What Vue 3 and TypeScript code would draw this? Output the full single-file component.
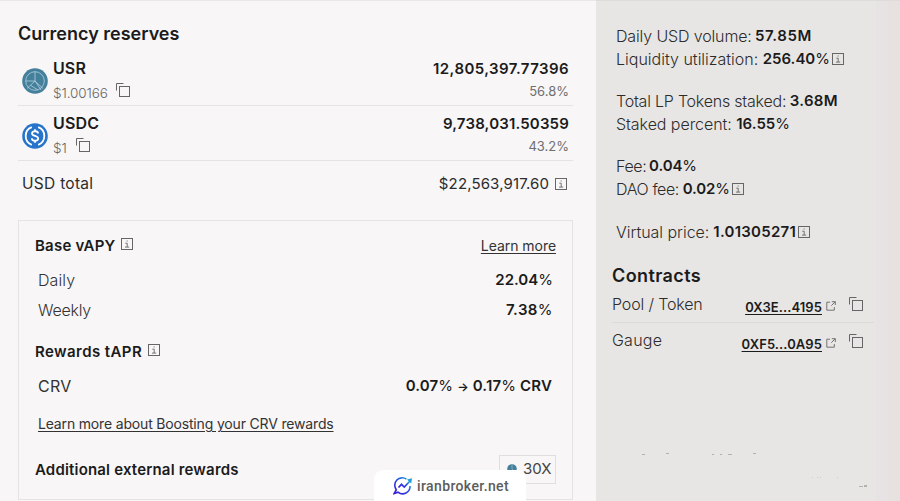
<script setup lang="ts">
import { h, type FunctionalComponent } from 'vue'

interface Reserve {
  symbol: string
  price: string
  amount: string
  share: string
}

const reserves: Reserve[] = [
  { symbol: 'USR', price: '$1.00166', amount: '12,805,397.77396', share: '56.8%' },
  { symbol: 'USDC', price: '$1', amount: '9,738,031.50359', share: '43.2%' },
]

const contracts = [
  { label: 'Pool / Token', address: '0X3E...4195', kind: 'pool' },
  { label: 'Gauge', address: '0XF5...0A95', kind: 'gauge' },
]

const InfoIcon: FunctionalComponent = () =>
  h('svg', { viewBox: '0 0 12 12', width: 12, height: 12, fill: 'none', stroke: '#666', 'stroke-width': 1 }, [
    h('rect', { x: 0.5, y: 0.5, width: 11, height: 11 }),
    h('path', { d: 'M4.3 5.2H6.2V9M4 9.1H8.2M5.6 3H6.7', 'stroke-width': 0.9 }),
  ])

const CopyIcon: FunctionalComponent = () =>
  h('svg', { viewBox: '0 0 14 14', width: 14, height: 14, fill: 'none', stroke: '#666', 'stroke-width': 1 }, [
    h('path', { d: 'M0.5 7.5V0.5H7.5' }),
    h('rect', { x: 3.5, y: 3.5, width: 10, height: 10 }),
  ])

const LaunchIcon: FunctionalComponent = () =>
  h('svg', { viewBox: '0 0 10 10', width: 10, height: 10, fill: 'none', stroke: '#666', 'stroke-width': 0.9 }, [
    h('path', { d: 'M4 1.2H0.8V9.2H8.3V6M5.8 0.7H9.3V4M9.2 0.8L5.3 4.7' }),
  ])
</script>

<template>
  <div class="page">
    <main class="main">
      <h2 class="title">Currency reserves</h2>
      <div v-for="r in reserves" :key="r.symbol" class="reserve" :class="r.symbol.toLowerCase()">
        <svg v-if="r.symbol === 'USR'" class="coin" viewBox="0 0 26 26">
          <circle cx="13" cy="13" r="12.8" fill="#447f9c" />
          <g fill="none" stroke="#b4d2dc" stroke-width="0.8">
            <circle cx="13" cy="13" r="9.3" />
            <path d="M13 3.7V13H3.7M13 13L21 20.5M13 13L5 20.5M8.5 17.3L16 22M13 13L19 22" />
          </g>
        </svg>
        <svg v-else class="coin" viewBox="0 0 26 26">
          <circle cx="13" cy="13" r="12.8" fill="#2775ca" />
          <g fill="none" stroke="#fff" stroke-width="1.8">
            <path d="M9.8 4.2A9.4 9.4 0 0 0 9.8 21.8M16.2 4.2A9.4 9.4 0 0 1 16.2 21.8" />
            <path d="M16.1 10.5C16 7.5 10 7.5 10 10.4C10 13.4 16.2 12.3 16.2 15.5C16.2 18.7 9.9 18.4 9.8 15.2M13 6.3V8.5M13 17.5V19.8" />
          </g>
        </svg>
        <div class="token">
          <b class="symbol">{{ r.symbol }}</b>
          <div class="price"><span>{{ r.price }}</span><CopyIcon /></div>
        </div>
        <div class="amounts">
          <b class="amount">{{ r.amount }}</b>
          <span class="share">{{ r.share }}</span>
        </div>
      </div>
      <div class="total">
        <span class="total-label">USD total</span>
        <span class="total-value">$22,563,917.60</span>
        <InfoIcon />
      </div>

      <section class="card">
        <div class="row head">
          <b class="base">Base vAPY</b><InfoIcon class="raised" />
          <a class="link more">Learn more</a>
        </div>
        <div class="row item daily"><span>Daily</span><b>22.04<i>%</i></b></div>
        <div class="row item weekly"><span>Weekly</span><b>7.38<i>%</i></b></div>
        <div class="row head second"><b class="rewards">Rewards tAPR</b><InfoIcon class="raised" /></div>
        <div class="row item crv"><span>CRV</span><b>0.07<i>%</i> <small>→</small> 0.17<i>%</i> CRV</b></div>
        <div class="row boost"><a class="link">Learn more about Boosting your CRV rewards</a></div>
        <div class="row head extra">
          <b class="external">Additional external rewards</b>
          <div class="chip">
            <svg class="dot" viewBox="0 0 10 10"><circle cx="5" cy="5" r="4.8" fill="#447f9c" /><path d="M5 1V5L8 8" fill="none" stroke="#a9ccd8" stroke-width=".6" /></svg>
            <span>30X</span>
          </div>
        </div>
      </section>
    </main>

    <aside class="side">
      <div class="stats">
        <p class="s1"><span>Daily USD volume:</span><b>57.85M</b></p>
        <p class="s2"><span>Liquidity utilization:</span><b>256.40<i>%</i></b><InfoIcon /></p>
        <p class="s3"><span>Total LP Tokens staked:</span><b>3.68M</b></p>
        <p class="s4"><span>Staked percent:</span><b>16.55<i>%</i></b></p>
        <p class="s5"><span>Fee:</span><b>0.04<i>%</i></b></p>
        <p class="s6"><span>DAO fee:</span><b>0.02<i>%</i></b><InfoIcon /></p>
        <p class="s7"><span>Virtual price:</span><b>1.01305271</b><InfoIcon /></p>
      </div>
      <h3 class="contracts-title">Contracts</h3>
      <div v-for="c in contracts" :key="c.kind" class="contract" :class="c.kind">
        <span class="c-label">{{ c.label }}</span>
        <a class="address">{{ c.address }}</a>
        <LaunchIcon class="launch" />
        <CopyIcon />
      </div>
      <svg class="specks" viewBox="0 0 260 40" fill="#b4b2b0">
        <path d="M30 5h3v1h-3zM54 4h3v1h-3zM100 5h2v1h-2zM108 5h2v1h-2zM116 5h4v1h-4zM141 4h3v1h-3zM247 37h4v1h-4zM252 36h3v2h-3z" />
        <path d="M200 28h1v1h-1zM205 28h1v1h-1zM208 28h1v1h-1zM225 28h1v1h-1z" opacity=".5" />
      </svg>
    </aside>

    <div class="watermark">
      <svg class="logo" viewBox="0 0 20 18" fill="none">
        <defs>
          <linearGradient id="ring" x1="0" y1="1" x2="1" y2="0">
            <stop offset="0" stop-color="#3a17d8" />
            <stop offset=".55" stop-color="#294ce8" />
            <stop offset="1" stop-color="#19b5dc" />
          </linearGradient>
        </defs>
        <path d="M13.5 2.2A7.4 7.4 0 0 0 3.3 12.7L1.2 16.5L5 15.2A7.4 7.4 0 0 0 17 9" stroke="url(#ring)" stroke-width="1.6" />
        <path d="M5.5 10.5L8.5 7.3L11.3 10L17 4" stroke="url(#ring)" stroke-width="1.7" />
        <path d="M14 2.6L19 1.3L18.2 6.5Z" fill="#1a9fdc" />
      </svg>
      <span>iranbroker.net</span>
    </div>
  </div>
</template>

<style>
body {
  background: #f8f6f7;
  overflow: hidden;
}
</style>

<style scoped>
* {
  box-sizing: border-box;
}
.page {
  position: relative;
  display: flex;
  width: 900px;
  height: 501px;
  overflow: hidden;
  background: #f8f6f7;
  box-shadow: inset 0 1px 0 #e9e7e8;
  color: #1b1b1b;
  font-family: Inter, "Liberation Sans", sans-serif;
  font-size: 15px;
  line-height: 20px;
  white-space: nowrap;
}
svg {
  display: block;
  flex: none;
}
b {
  font-weight: 600;
}
i {
  font-style: normal;
  font-weight: 400;
}
small {
  font-size: 12px;
}
.main {
  width: 596px;
  padding: 22px 23px 0 18px;
}
.title,
.contracts-title {
  margin: 0;
  font-size: 18px;
  line-height: 24px;
  font-weight: 600;
}
.title {
  height: 29px;
}
.contracts-title {
  letter-spacing: 0.4px;
}
.reserve {
  display: flex;
  height: 55px;
  padding: 8px 5px 0 4px;
  border-bottom: 1px solid #e5e3e4;
}
.coin {
  width: 26px;
  height: 26px;
  margin: 9px 5px 0 0;
}
.token {
  flex: 1;
}
.symbol,
.amount {
  display: block;
}
.symbol {
  margin-top: -1px;
  font-size: 16px;
  letter-spacing: 0.1px;
}
.usdc .symbol {
  letter-spacing: 0.2px;
}
.amount {
  margin-right: -1px;
  letter-spacing: 0.17px;
}
.usr .amount {
  letter-spacing: 0.42px;
}
.price {
  display: flex;
  gap: 9px;
  margin-top: 5px;
  color: #666;
  font-size: 13.5px;
  font-weight: 300;
}
.usr .price {
  gap: 8px;
  letter-spacing: -0.1px;
}
.amounts {
  text-align: right;
}
.share {
  display: block;
  margin: 2px -1px 0 0;
  color: #6f6f6f;
  font-size: 13px;
}
.total {
  display: flex;
  align-items: center;
  height: 20px;
  margin: 13px 6px 0 4px;
  color: #2c2c2c;
}
.total-label {
  flex: 1;
  font-size: 15.5px;
  letter-spacing: 0.28px;
}
.total-value {
  margin-right: 6px;
  letter-spacing: 0.13px;
}
.card {
  height: 280px;
  margin-top: 26px;
  padding: 15px 16px 0;
  border: 1px solid #e5e3e4;
}
.row {
  display: flex;
  align-items: center;
  height: 20px;
}
.head .raised {
  margin: -4px 0 0 6px;
}
.base {
  letter-spacing: 0.22px;
}
.rewards {
  letter-spacing: 0.42px;
}
.external {
  padding-top: 1px;
  letter-spacing: 0.18px;
}
.link {
  color: #333;
  font-size: 14px;
  text-decoration: underline;
  text-underline-offset: 2px;
}
.more {
  margin-left: auto;
  letter-spacing: -0.05px;
}
.item {
  justify-content: space-between;
  padding: 0 3px 0 3px;
}
.item > span {
  color: #333;
}
.daily {
  margin-top: 14px;
}
.daily > span,
.weekly > span {
  font-size: 16px;
  font-weight: 300;
}
.daily > span {
  letter-spacing: 0.1px;
}
.weekly {
  margin-top: 10px;
}
.weekly > span {
  letter-spacing: -0.25px;
}
.weekly > b {
  letter-spacing: 0.4px;
}
.second {
  margin-top: 22px;
}
.crv {
  margin-top: 14px;
  padding-right: 4px;
}
.crv > span {
  font-size: 16px;
  letter-spacing: 0.3px;
}
.crv > b {
  letter-spacing: 0.15px;
}
.boost {
  margin-top: 18px;
  padding-left: 3px;
}
.boost .link {
  letter-spacing: -0.17px;
}
.extra {
  justify-content: space-between;
  margin-top: 25px;
}
.chip {
  display: flex;
  align-items: center;
  gap: 6px;
  width: 57px;
  height: 29px;
  padding-left: 7px;
  border: 1px solid #e0dedf;
  color: #444;
}
.dot {
  width: 10px;
  height: 10px;
}
.side {
  width: 304px;
  padding: 26px 26px 0 16px;
  background: linear-gradient(90deg, #e8e6e5 0 280px, #e7e3e5 280px 292px, #e7e2df 292px);
  box-shadow: inset 0 1px 0 #dedcdb;
}
.stats {
  height: 238px;
  padding-left: 4px;
  color: #2c2c2c;
}
.stats p {
  display: flex;
  align-items: center;
  height: 20px;
  margin: 0;
}
.stats span,
.c-label {
  flex: none;
  font-size: 16px;
  font-weight: 300;
}
.stats b {
  margin-left: auto;
  color: #1b1b1b;
}
.stats svg {
  margin-left: 2px;
}
.stats .s1 {
  width: 196px;
}
.s1 span {
  letter-spacing: -0.14px;
}
.s1 b {
  letter-spacing: 0.6px;
}
.stats .s2 {
  width: 228px;
  margin-top: 3px;
}
.s2 b {
  letter-spacing: 0;
}
.stats .s3 {
  width: 222px;
  margin-top: 22px;
}
.s3 span {
  letter-spacing: -0.22px;
}
.s3 b {
  letter-spacing: 0.35px;
}
.stats .s4 {
  width: 174px;
  margin-top: 3px;
}
.s4 span {
  letter-spacing: -0.06px;
}
.stats .s5 {
  width: 81px;
  margin-top: 22px;
}
.s5 span {
  letter-spacing: -0.4px;
}
.s5 b {
  letter-spacing: -0.1px;
}
.stats .s6 {
  width: 128px;
  margin-top: 3px;
}
.s6 span {
  letter-spacing: -0.4px;
}
.s6 b {
  letter-spacing: -0.1px;
}
.stats .s7 {
  width: 194px;
  margin-top: 23px;
}
.s7 span {
  letter-spacing: -0.03px;
}
.s7 b {
  letter-spacing: 0.25px;
}
.contract {
  display: flex;
  width: 262px;
  height: 35px;
  padding: 6px 11px 0 0;
  color: #2c2c2c;
}
.contract.pool {
  border-bottom: 1px solid #dcdad9;
}
.contract.gauge {
  padding-top: 8px;
}
.c-label {
  flex: 1;
  letter-spacing: -0.15px;
}
.gauge .c-label {
  margin-top: -1px;
  letter-spacing: 0.22px;
}
.address {
  margin-top: 3px;
  color: #1b1b1b;
  font-size: 13px;
  font-weight: 600;
  letter-spacing: 0.08px;
  text-decoration: underline;
  text-underline-offset: 2px;
}
.launch {
  margin: 7px 13px 0 4px;
}
.contract svg:last-child {
  margin-top: 3px;
}
.specks {
  width: 260px;
  height: 40px;
  margin-top: 91px;
}
.watermark {
  position: absolute;
  left: 374px;
  top: 470px;
  display: flex;
  align-items: center;
  gap: 4px;
  width: 152px;
  height: 40px;
  padding: 0 0 8px 19px;
  border-radius: 9px;
  background: #fff;
  color: #5c5c5c;
  font-family: Roboto, sans-serif;
  font-size: 14px;
  font-weight: 500;
  letter-spacing: 0.38px;
}
.logo {
  width: 20px;
  height: 18px;
}
</style>
